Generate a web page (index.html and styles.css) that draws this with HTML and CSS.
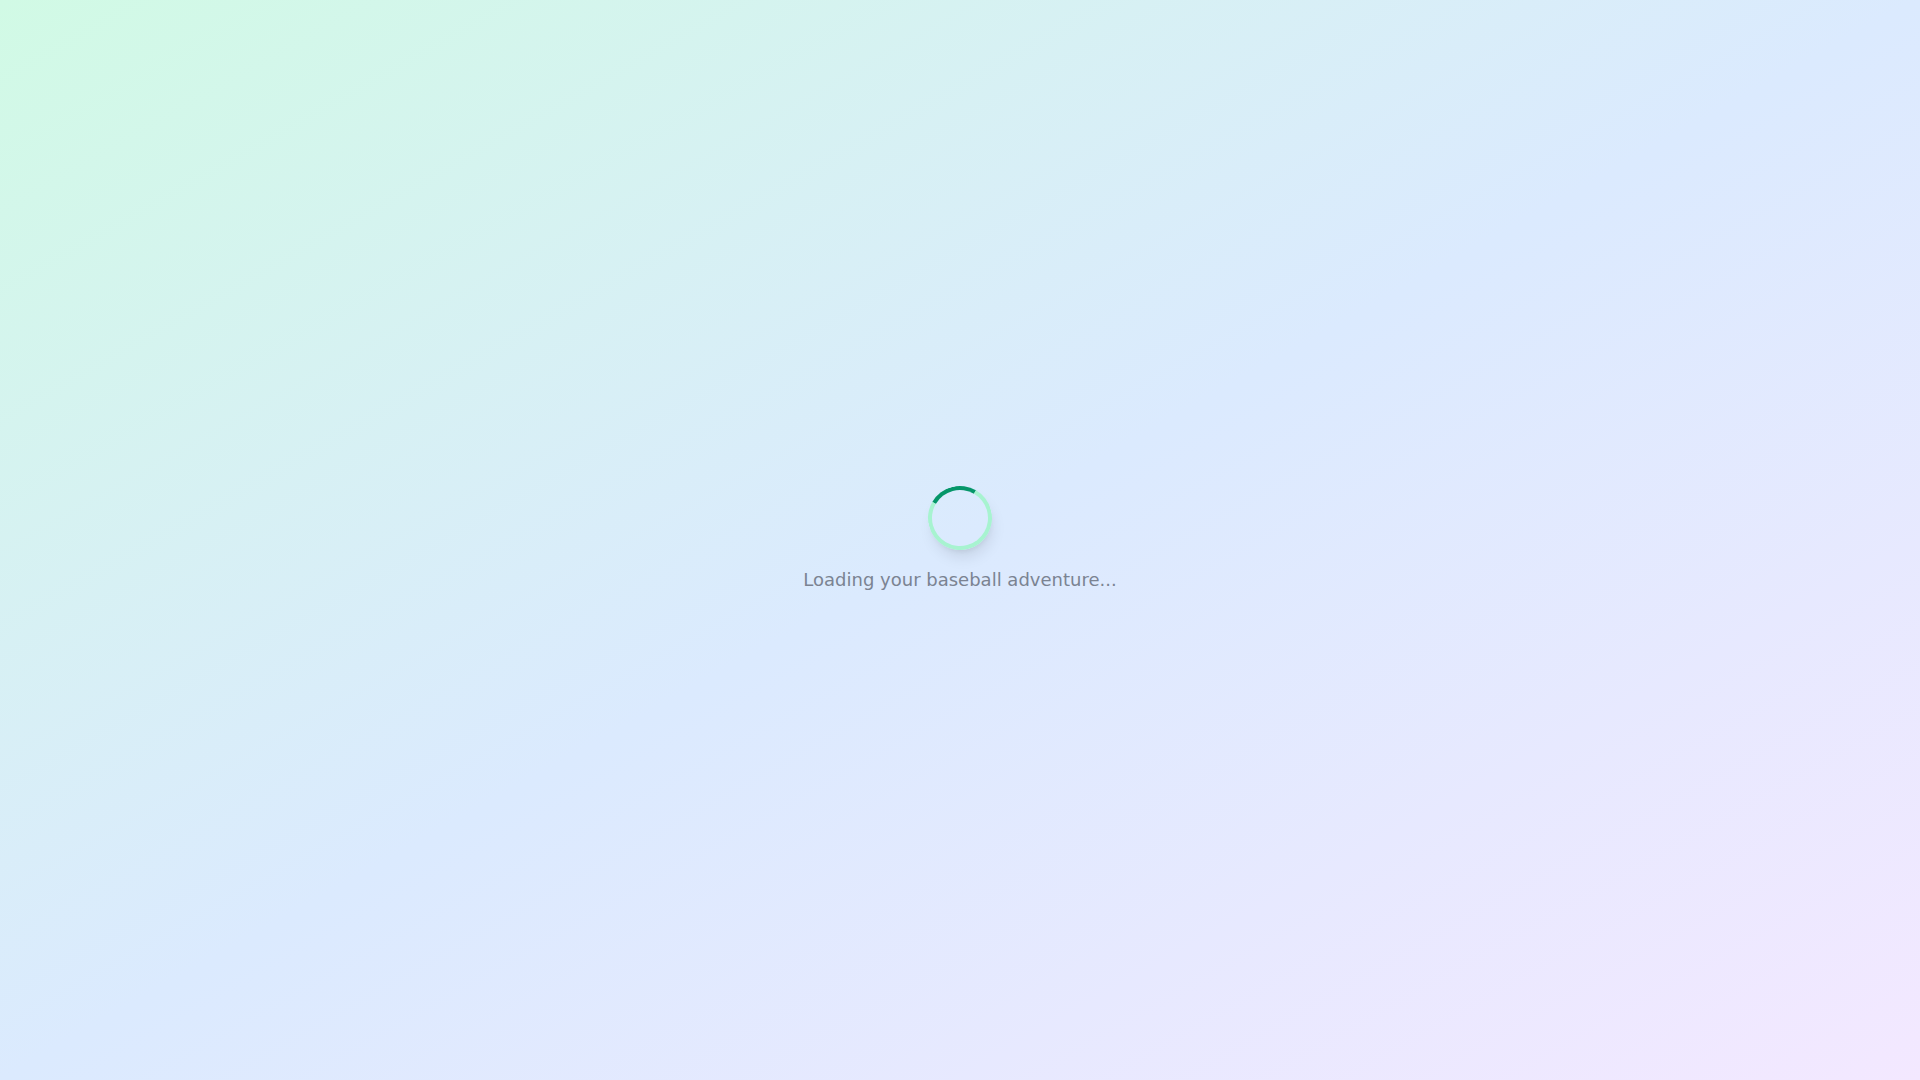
FILE: index.html
```html
<!DOCTYPE html>
<html lang="en">
<head>
<meta charset="utf-8">
<title>Loading</title>
<link rel="stylesheet" href="styles.css">
</head>
<body>
<main class="screen">
  <div class="loader">
    <div class="spinner"></div>
    <p class="loader-text">Loading your baseball adventure...</p>
  </div>
</main>
</body>
</html>
```
FILE: styles.css
```css
* { box-sizing: border-box; }
html, body { margin: 0; padding: 0; }
body {
  font-family: "DejaVu Sans", "Noto Sans", sans-serif;
}
.screen {
  min-height: 100vh;
  display: flex;
  align-items: center;
  justify-content: center;
  background: linear-gradient(to bottom right, #d1fae5, #dbeafe, #f3e8ff);
}
.loader {
  display: flex;
  flex-direction: column;
  align-items: center;
}
.spinner {
  width: 64px;
  height: 64px;
  border-radius: 50%;
  border: 4px solid #a7f3d0;
  border-top-color: #059669;
  transform: rotate(-15deg);
  box-shadow: 0 10px 15px -3px rgba(0,0,0,0.1), 0 4px 6px -4px rgba(0,0,0,0.1);
  margin-bottom: 16px;
}
.loader-text {
  margin: 0;
  font-size: 18px;
  line-height: 28px;
  color: #6b7280;
  opacity: 0.85;
}
```
